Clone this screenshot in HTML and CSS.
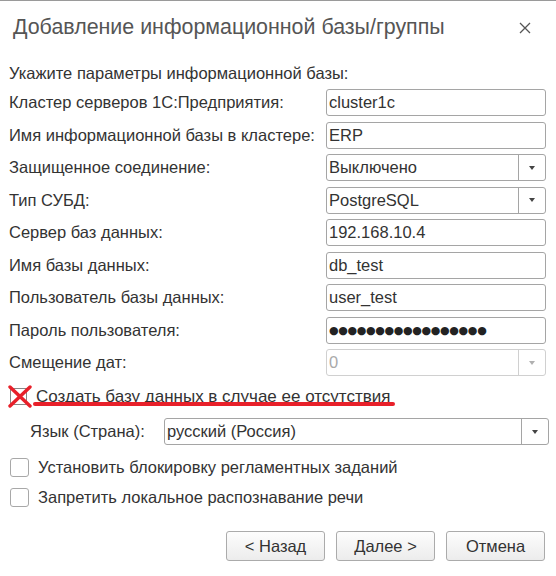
FILE: index.html
```html
<!DOCTYPE html>
<html lang="ru">
<head>
<meta charset="utf-8">
<link rel="stylesheet" href="styles.css">
</head>
<body>
<div class="dialog">
  <div class="header">
    <div class="title">Добавление информационной базы/группы</div>
    <div class="close">
      <svg width="12" height="12" viewBox="0 0 12 12"><path d="M1 1L11 11M11 1L1 11" stroke="#555" stroke-width="1.3" fill="none"/></svg>
    </div>
  </div>
  <div class="intro">Укажите параметры информационной базы:</div>
  <div class="grid">
    <div class="label">Кластер серверов 1С:Предприятия:</div>
    <div class="field">cluster1c</div>
    <div class="label">Имя информационной базы в кластере:</div>
    <div class="field">ERP</div>
    <div class="label">Защищенное соединение:</div>
    <div class="field select"><span class="val">Выключено</span><span class="btn"><i class="arrow"></i></span></div>
    <div class="label">Тип СУБД:</div>
    <div class="field select"><span class="val">PostgreSQL</span><span class="btn"><i class="arrow"></i></span></div>
    <div class="label">Сервер баз данных:</div>
    <div class="field">192.168.10.4</div>
    <div class="label">Имя базы данных:</div>
    <div class="field">db_test</div>
    <div class="label">Пользователь базы данных:</div>
    <div class="field">user_test</div>
    <div class="label">Пароль пользователя:</div>
    <div class="field pass">●●●●●●●●●●●●●●●●●</div>
    <div class="label">Смещение дат:</div>
    <div class="field select disabled"><span class="val">0</span><span class="btn"><i class="arrow"></i></span></div>
  </div>
  <div class="check-row create">
    <span class="box"></span>
    <svg class="redx" width="24" height="23" viewBox="0 0 24 23"><path d="M2 2L22 21M22 2L2 21" stroke="#e8202a" stroke-width="3.4" stroke-linecap="round" fill="none"/></svg>
    <span class="ctext">Создать базу данных в случае ее отсутствия</span>
    <span class="redline"></span>
  </div>
  <div class="lang-row">
    <div class="label lang-label">Язык (Страна):</div>
    <div class="field select lang"><span class="val">русский (Россия)</span><span class="btn"><i class="arrow"></i></span></div>
  </div>
  <div class="check-row plain">
    <span class="box"></span>
    <span class="ctext">Установить блокировку регламентных заданий</span>
  </div>
  <div class="check-row plain second">
    <span class="box"></span>
    <span class="ctext">Запретить локальное распознавание речи</span>
  </div>
  <div class="buttons">
    <button class="b">&lt; Назад</button>
    <button class="b">Далее &gt;</button>
    <button class="b">Отмена</button>
  </div>
</div>
</body>
</html>
```
FILE: styles.css
```css
html, body {
  margin: 0;
  padding: 0;
  background: #fff;
}
body {
  font-family: "Liberation Sans", Arial, sans-serif;
  font-size: 16.5px;
  color: #333;
}
.dialog {
  width: 556px;
  height: 576px;
  border-top: 1px solid #9a9a9a;
  box-sizing: border-box;
}
.header {
  height: 54px;
  display: flex;
  align-items: center;
  justify-content: space-between;
  padding: 0 25px 0 13px;
}
.title {
  font-size: 21.4px;
  color: #555;
  margin-top: -1px;
}
.close {
  display: flex;
}
.intro {
  padding-left: 9px;
  line-height: 18px;
  margin-top: 9px;
}
.grid {
  display: grid;
  grid-template-columns: 317px 220px;
  grid-auto-rows: 27px;
  row-gap: 5.5px;
  padding-left: 9px;
  margin-top: 7px;
}
.label {
  display: flex;
  align-items: center;
  white-space: nowrap;
}
.field {
  box-sizing: border-box;
  border: 1px solid #a5a5a5;
  border-radius: 3px;
  display: flex;
  align-items: center;
  padding-left: 2px;
  white-space: nowrap;
  color: #333;
  overflow: hidden;
}
.field.select {
  padding-left: 0;
}
.select .val {
  flex: 1;
  padding-left: 2px;
}
.select .btn {
  width: 26px;
  align-self: stretch;
  border-left: 1px solid #a5a5a5;
  display: flex;
  align-items: center;
  justify-content: center;
}
.arrow {
  width: 0;
  height: 0;
  border-left: 3.5px solid transparent;
  border-right: 3.5px solid transparent;
  border-top: 4px solid #444;
  margin-left: -1px;
}
.disabled {
  border-color: #d0d0d0;
  color: #aaa;
}
.disabled .btn {
  border-left-color: #d0d0d0;
}
.disabled .arrow {
  border-top-color: #b0b0b0;
}
.pass {
  font-family: "DejaVu Sans", sans-serif;
  font-size: 11px;
  letter-spacing: -0.34px;
  color: #222;
  padding-left: 2px;
}
.check-row {
  position: relative;
  display: flex;
  align-items: center;
  padding-left: 10px;
  height: 19px;
}
.check-row .box {
  width: 17px;
  height: 17px;
  box-sizing: border-box;
  border: 1px solid #a8a8a8;
  border-radius: 3px;
  background: #fff;
  flex: none;
}
.check-row .ctext {
  margin-left: 9px;
}
.create .ctext {
  font-size: 17px;
}
.create {
  margin-top: 11px;
}
.create .box {
  border-color: #888;
  border-radius: 0;
}
.redx {
  position: absolute;
  left: 8px;
  top: -2px;
}
.redline {
  position: absolute;
  left: 33px;
  top: 15px;
  width: 362px;
  height: 4px;
  border-radius: 2px;
  background: #e8202a;
}
.lang-row {
  display: flex;
  align-items: center;
  margin-top: 12px;
  padding-left: 30px;
  height: 27px;
}
.lang-label {
  width: 134px;
}
.field.lang {
  width: 385px;
  height: 27px;
}
.plain {
  margin-top: 13px;
}
.plain .box {
  width: 19px;
  height: 19px;
}
.plain.second {
  margin-top: 11px;
}
.buttons {
  display: flex;
  justify-content: flex-end;
  gap: 11px;
  padding-right: 11px;
  margin-top: 24px;
}
.b {
  width: 99px;
  height: 30px;
  border: 1px solid #ababab;
  border-radius: 3px;
  background: linear-gradient(#fdfdfd, #ececec);
  font-family: "Liberation Sans", Arial, sans-serif;
  font-size: 16.5px;
  color: #333;
  padding: 0;
}
```
